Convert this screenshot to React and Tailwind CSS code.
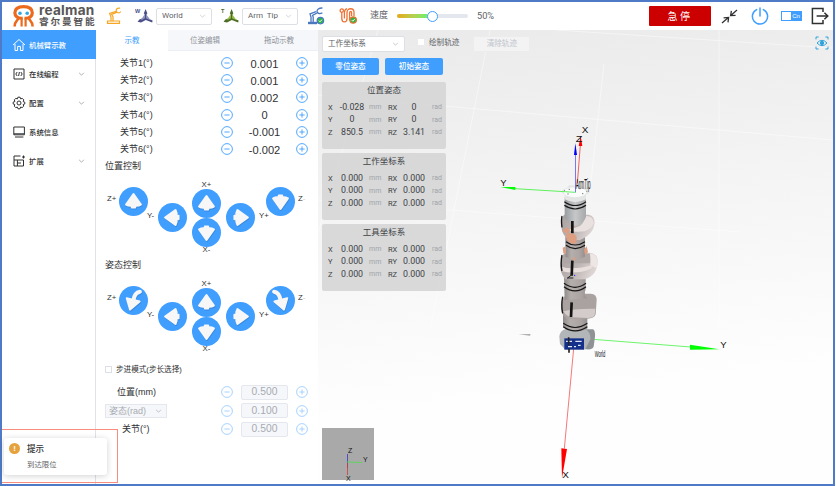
import React from "react";

const FONT = "font-['Liberation_Sans','Noto_Sans_CJK_SC',sans-serif]";

function Chevron({ className = "" }) {
  return (
    <svg viewBox="0 0 8 5" className={`h-[4px] w-[7px] shrink-0 ${className}`} fill="none" stroke="currentColor" strokeWidth="0.9">
      <path d="M1 1 L4 4 L7 1" />
    </svg>
  );
}

function Logo() {
  return (
    <div className="ml-[11px] flex h-[24px] w-[84px] shrink-0 items-start">
      <svg viewBox="0 0 21 24" className="h-[24px] w-[21px] shrink-0">
        <g fill="none" stroke="#ec6a1e" strokeWidth="3.2">
          <path d="M9.6 14.2 C4.2 14.6 1.8 11.6 1.9 8.8 C2 4.6 5.6 2.6 10.6 2.6 C15.6 2.6 19.2 4.6 19.3 8.8 C19.4 11.6 17 14.6 11.6 14.2" />
          <path d="M8.6 13.6 V22.4 M12.6 13.6 V22.4" strokeWidth="2.2" />
          <path d="M5.4 13.6 C5.4 17 1.6 16.5 1.6 22.4 M15.8 13.6 C15.8 17 19.6 16.5 19.6 22.4" strokeWidth="2.6" />
        </g>
        <circle cx="7" cy="9.2" r="1.8" fill="#35a8e0" />
        <circle cx="14.2" cy="9.2" r="1.8" fill="#35a8e0" />
      </svg>
      <div className="ml-[5px] flex flex-col whitespace-nowrap text-[#595757]">
        <span className="h-[12px] font-['Inter',sans-serif] text-[13.6px] leading-[13px] font-bold tracking-[0.25px]">realman</span>
        <span className="h-[11px] text-[9.6px] leading-[12px] font-bold tracking-[1.9px]">睿尔曼智能</span>
      </div>
    </div>
  );
}

function ArmIcon({ className, color }) {
  return (
    <svg viewBox="0 0 16 18" className={`h-[18px] w-[16px] shrink-0 ${className}`} fill="none" stroke={color} strokeWidth="1.2" strokeLinecap="round">
      <path d="M1.5 14 H13.5 V16.4 H1.5 Z" />
      <path d="M5 13.8 V10 L3.6 6.4 L10.2 4.2 M7 13.8 V9.6 L5.6 7.4 L10.6 5.4" />
      <path d="M13.6 1.2 C11 .8 9.6 2.6 10.4 4.4 C11.2 6 13.6 6.2 14.4 5" />
    </svg>
  );
}

function AxisIcon({ letter, dark, light }) {
  return (
    <svg viewBox="0 0 18 18" className="h-[18px] w-[18px] shrink-0">
      <text x="0" y="5.5" fontSize="5.5" fontWeight="700" fill={dark}>{letter}</text>
      <path d="M10.6 2 L12.4 6.6 L11.6 7 V11 L17.6 13.6 L17.2 15.4 L10.8 13 L6 15.4 L2.6 14.8 L4.4 12.6 L9.6 10.6 V7 L8.8 6.6Z" fill={dark} />
      <path d="M9.8 7 V11.4 L5.6 13.4 Z M11.4 7.500 V11.4 L15.6 13.2Z" fill={light} />
    </svg>
  );
}

function GreenCheck({ cx, cy }) {
  return (
    <g>
      <circle cx={cx} cy={cy} r="3.2" fill="#2cb742" />
      <path d={`M${cx - 1.5} ${cy} l1.1 1.2 l2 -2.2`} fill="none" stroke="#fff" strokeWidth="0.9" />
    </g>
  );
}

function Header() {
  return (
    <header className="flex h-[28px] shrink-0 items-center bg-white text-[8px] text-[#606266]">
      <Logo />
      <ArmIcon className="ml-[9px]" color="#f5a623" />
      <div className="ml-[13px] flex"><AxisIcon letter="W" dark="#4a4e86" light="#8d92bf" /></div>
      <div className="ml-[3px] flex h-[17px] w-[56px] items-center justify-between rounded-[2px] border border-[#dcdfe6] px-[5px] font-['Roboto',sans-serif]">
        <span>World</span><Chevron className="text-[#c0c4cc]" />
      </div>
      <div className="ml-[9px] flex"><AxisIcon letter="T" dark="#4c6b22" light="#94bb40" /></div>
      <div className="ml-[3px] flex h-[17px] w-[56px] items-center justify-between rounded-[2px] border border-[#dcdfe6] px-[5px] font-['Roboto',sans-serif]">
        <span className="whitespace-pre">Arm  Tip</span><Chevron className="text-[#c0c4cc]" />
      </div>
      <svg viewBox="0 0 17 18" className="ml-[10px] h-[18px] w-[17px] shrink-0" fill="none" stroke="#4a78c0" strokeWidth="1.3">
        <path d="M0 16 H9" strokeWidth="2.4" />
        <path d="M3 15 V10 L2 7 L8 4.6 M5.2 15 V10 L4.6 8.4 L9 6" />
        <path d="M14.4 1 C11 0.8 8.6 2.4 9 4.8 C9.6 6.8 12 7 14.4 5.8" />
        <GreenCheck cx={12.4} cy={13.6} />
      </svg>
      <svg viewBox="0 0 18 18" className="ml-[14px] h-[18px] w-[18px] shrink-0" fill="none" stroke="#ee7135" strokeWidth="1.3">
        <circle cx="2.8" cy="3.6" r="1.7" />
        <path d="M2.8 5.4 V11.500 C2.8 16 8 16 8 11.500 V5.500 C8 0.500 15 0.500 15 5.500 V9 M5.4 11.500 V5.500 C5.6 3 6.6 2 8 1.600 M10.6 13.500 V6 C10.6 4 12.600 4 12.600 6 V9" />
        <GreenCheck cx={14.2} cy={13} />
      </svg>
      <span className="ml-[13px] text-[9px]">速度</span>
      <div className="ml-[9px] flex h-[4px] w-[71px] items-center rounded-full bg-[#e4e7ed]">
        <div className="h-[4px] w-[30px] rounded-l-full bg-linear-to-r from-[#e6a817] to-[#67ef6a]" />
        <div className="size-[11px] rounded-full border-[1.5px] border-[#409eff] bg-white" />
      </div>
      <span className="ml-[9px] font-['Roboto',sans-serif] text-[9.2px]">50%</span>
      <div className="ml-auto flex h-[20px] w-[62px] items-center justify-center rounded-[1px] bg-[#cc0000] text-[10px] tracking-[2.5px] text-white">急停</div>
      <svg viewBox="0 0 17 17" className="ml-[10px] size-[17px] shrink-0" fill="none" stroke="#303133" strokeWidth="1.3">
        <path d="M16 2 L9.8 7.4 M10.4 2.8 L9.6 7.6 L14.6 7.4 M1 15 L7.4 9.6 M2.6 9.8 L7.6 9.4 L7 14.4" />
      </svg>
      <svg viewBox="0 0 18 18" className="ml-[13px] size-[18px] shrink-0" fill="none" stroke="#409eff" strokeWidth="1.5" strokeLinecap="round">
        <path d="M5.6 2.6 A7.6 7.6 0 1 0 12.4 2.6 M9 1 V9" />
      </svg>
      <div className="ml-[12px] flex h-[10px] w-[21px] border border-[#409eff] bg-[#409eff]">
        <div className="h-full w-[9px] bg-white" />
        <span className="flex flex-1 items-center justify-center text-[6px] leading-none text-white">Cn</span>
      </div>
      <svg viewBox="0 0 18 18" className="mr-[4px] ml-[9px] size-[18px] shrink-0" fill="none" stroke="#303133" strokeWidth="1.5">
        <path d="M12 5 V1.4 H1.4 V16.6 H12 V13 M5.6 9 H16.4 M13.4 5.8 L16.8 9 L13.4 12.2" />
      </svg>
    </header>
  );
}

const NAV = [
  { label: "机械臂示教", active: true, icon: <path d="M1 7 L7 1.5 L13 7 M3 6 V12.5 H5.6 V8.4 H8.4 V12.5 H11 V6" /> },
  { label: "在线编程", arrow: true, icon: <path d="M2 2 H12 V12 H2Z M5.2 5 L3.8 7 L5.2 9 M8.8 5 L10.2 7 L8.8 9 M7.4 5 L6.6 9" /> },
  { label: "配置", arrow: true, icon: <><path d="M5.9 1.2 H8.1 L8.6 2.9 L10.4 2.4 L11.8 3.9 L11.2 5.6 L12.8 6.2 V8 L11.2 8.5 L11.7 10.2 L10.2 11.6 L8.6 11 L8 12.8 H6 L5.4 11.1 L3.7 11.6 L2.3 10.2 L2.8 8.5 L1.2 8 V6.1 L2.9 5.5 L2.3 3.8 L3.8 2.4 L5.4 2.9Z" /><circle cx="7" cy="7" r="2" /></> },
  { label: "系统信息", icon: <path d="M1.8 2 H12.4 V9.8 H1.8Z M1.8 8.8 H12.4 M3 12 H11.4" /> },
  { label: "扩展", arrow: true, icon: <path d="M8.5 2 H2 V12 H11.5 V6 H2 M5.4 6 V12 M5.4 9 H9 M11.5 1.5 V4.5 M10 3 H13" /> },
];

function Sidebar() {
  return (
    <nav className="flex w-[94px] shrink-0 flex-col border-r border-[#e0e2e8] bg-white">
      {NAV.map((n) => (
        <div key={n.label} className={`flex h-[29.2px] shrink-0 items-center pl-[10px] text-[7.4px] font-medium ${n.active ? "-mr-px bg-[#409eff] text-white" : "text-[#303133]"}`}>
          <svg viewBox="0 0 14 14" className="size-[14px] shrink-0" fill="none" stroke="currentColor" strokeWidth="1">{n.icon}</svg>
          <span className="ml-[3px] pt-[1px] whitespace-nowrap">{n.label}</span>
          {n.arrow && <Chevron className="mr-[10px] ml-auto h-[3.500px] w-[5.500px] text-[#909399]" />}
        </div>
      ))}
    </nav>
  );
}

function RoundBtn({ plus, faded }) {
  return (
    <svg viewBox="0 0 12 12" className={`size-[12px] shrink-0 ${faded ? "opacity-50" : ""}`} fill="none" stroke="#409eff" strokeWidth="0.9">
      <circle cx="6" cy="6" r="5.4" />
      <path d={plus ? "M3.4 6 H8.6 M6 3.4 V8.6" : "M3.4 6 H8.6"} />
    </svg>
  );
}

const ANGLES = { up: 0, right: 90, down: 180, left: 270 };

function ArrowButton({ dir, className = "" }) {
  const turn = dir === "turnLeft" || dir === "turnRight";
  return (
    <svg viewBox="0 0 86 86" className={`size-[29px] shrink-0 ${className}`}>
      <circle cx="43" cy="43" r="43" fill="#409eff" />
      {[["#2f6fb5", 3, 0.45], ["#f7f7f7", 0, 1]].map(([c, d, o]) => (
        <g key={c} transform={`translate(${d * 0.5} ${d})`} opacity={o} stroke={c} fill={c} strokeLinejoin="round" strokeWidth="6">
          {turn ? (
            <g transform={dir === "turnRight" ? "translate(86 0) scale(-1 1)" : undefined}>
              <path d="M23 36 L61 46 L33 70Z" />
              <path d="M62 17 Q46 20 43 42" fill="none" strokeWidth="12" strokeLinecap="round" />
            </g>
          ) : (
            <path d="M43 21 L65 52 Q56 57 48 55 V61 H38 V55 Q30 57 21 52Z" transform={`rotate(${ANGLES[dir]} 43 43)`} />
          )}
        </g>
      ))}
    </svg>
  );
}

function Pad({ left, right }) {
  return (
    <div className="flex h-[78px] items-start pl-[11px] text-[7.8px] leading-[10px] whitespace-nowrap text-[#303133]">
      <span className="mt-[14px] w-[12px]">Z+</span>
      <ArrowButton dir={left} className="mt-[7px]" />
      <span className="mt-[31px] -ml-px w-[11px]">Y-</span>
      <ArrowButton dir="left" className="mt-[23px]" />
      <div className="mx-[5px] flex w-[29px] flex-col items-center">
        <span className="h-[9px]">X+</span>
        <ArrowButton dir="up" />
        <ArrowButton dir="down" className="mt-[0.7px]" />
        <span className="-mt-[2px]">X-</span>
      </div>
      <ArrowButton dir="right" className="mt-[23px]" />
      <span className="mt-[31px] ml-[4px] w-[7px]">Y+</span>
      <ArrowButton dir={right} className="mt-[7px]" />
      <span className="mt-[14px] ml-[3px]">Z<span className="text-[#c8c8c8]">-</span></span>
    </div>
  );
}

const JOINTS = ["0.001", "0.001", "0.002", "0", "-0.001", "-0.002"];

function StepRow({ children, value }) {
  return (
    <div className="flex h-[18.4px] items-center">
      <div className="flex w-[116px] items-center">{children}</div>
      <RoundBtn faded />
      <div className="mx-[8px] flex h-[15px] w-[47px] items-center justify-center rounded-[2px] border border-[#e4e7ed] bg-[#f5f7fa] text-[10.3px] text-[#a8abb2]">{value}</div>
      <RoundBtn plus faded />
    </div>
  );
}

function TeachPanel() {
  return (
    <section className="flex w-[222px] shrink-0 flex-col bg-white text-[9px] leading-[12px] text-[#303133]">
      <div className="flex h-[21px] shrink-0 text-[7.5px] text-[#909399]">
        <div className="flex w-[72px] items-center justify-center pt-[1px] text-[#409eff]">示教</div>
        <div className="flex flex-1 border-b border-[#ebeef5] bg-[#f5f7fa] pt-[2px]">
          <div className="flex flex-1 items-center justify-center">位姿编辑</div>
          <div className="flex flex-1 items-center justify-center pr-[2px]">拖动示教</div>
        </div>
      </div>
      <div className="mt-[3.5px] shrink-0">
        {JOINTS.map((v, i) => (
          <div key={i} className="flex h-[17.2px] items-center">
            <span className="ml-[24px] w-[101px]">关节{i + 1}(°)</span>
            <RoundBtn />
            <span className="w-[63px] pt-[1px] text-center text-[11.1px]">{v}</span>
            <RoundBtn plus />
          </div>
        ))}
      </div>
      <div className="mt-[2px] ml-[9px]">位置控制</div>
      <div className="mt-[8px]"><Pad left="up" right="down" /></div>
      <div className="mt-[1.5px] ml-[9px]">姿态控制</div>
      <div className="mt-[7.5px]"><Pad left="turnLeft" right="turnRight" /></div>
      <div className="mt-[7px] ml-[9px] flex items-center text-[7.6px]">
        <span className="mr-[4px] size-[7px] border border-[#dcdfe6]" />步进模式(步长选择)
      </div>
      <div className="mt-[7.5px] pl-[9px]">
        <StepRow value="0.500"><span className="ml-[12px]">位置(mm)</span></StepRow>
        <StepRow value="0.100">
          <div className="flex h-[14px] w-[62px] items-center justify-between border border-[#e4e7ed] bg-[#f5f7fa] pr-[4px] pl-[3px] text-[#a8abb2]">
            姿态(rad)<Chevron className="text-[#a8abb2]" />
          </div>
        </StepRow>
        <StepRow value="0.500"><span className="ml-[17px]">关节(°)</span></StepRow>
      </div>
    </section>
  );
}

function PoseCard({ title, rows }) {
  return (
    <div className="h-[67px] w-[124px] rounded-[2px] bg-[#d3d3d3]/85 font-['Roboto','Noto_Sans_CJK_SC',sans-serif] text-[#404347]">
      <div className="pt-[2px] text-center text-[8.5px] leading-[12px]">{title}</div>
      <div className="mt-[5px]">
        {rows.map(([a, v, b, w]) => (
          <div key={a} className="flex h-[12.5px] items-center pl-[6px] text-[7.5px] whitespace-nowrap">
            <span className="w-[9px]">{a}</span>
            <span className="w-[30px] text-center text-[8.8px]">{v}</span>
            <span className="ml-[2px] w-[19px] text-[7px] text-[#a0a4aa]">mm</span>
            <span className="w-[12px]">{b}</span>
            <span className="w-[28px] text-center text-[8.8px]">{w}</span>
            <span className="ml-[4px] text-[7px] text-[#a0a4aa]">rad</span>
          </div>
        ))}
      </div>
    </div>
  );
}

const ZERO = [["X", "0.000", "RX", "0.000"], ["Y", "0.000", "RY", "0.000"], ["Z", "0.000", "RZ", "0.000"]];

function Scene() {
  return (
    <svg viewBox="318 30 515 454" className="absolute inset-0 h-full w-full">
      <defs>
        <linearGradient id="floor" x1="0" y1="0" x2="0.12" y2="1">
          <stop offset="0" stopColor="#eaeaea" /><stop offset="0.45" stopColor="#f5f5f5" /><stop offset="0.85" stopColor="#fefefe" />
        </linearGradient>
        <linearGradient id="tube" x1="0" x2="1">
          <stop offset="0" stopColor="#8f8a8a" /><stop offset="0.3" stopColor="#b4aeac" /><stop offset="0.75" stopColor="#aaa3a2" /><stop offset="1" stopColor="#958f8f" />
        </linearGradient>
        <linearGradient id="tubeTop" x1="0" x2="1">
          <stop offset="0" stopColor="#999da0" /><stop offset="0.5" stopColor="#c6c7c9" /><stop offset="1" stopColor="#a6a8aa" />
        </linearGradient>
        <linearGradient id="shell" x1="0" x2="1" y1="0" y2="0.4">
          <stop offset="0" stopColor="#a8a19f" /><stop offset="0.6" stopColor="#bdb6b4" /><stop offset="1" stopColor="#ddd5d3" />
        </linearGradient>
      </defs>
      <rect x="318" y="30" width="515" height="454" fill="url(#floor)" />
      <g stroke="#fff" strokeWidth="0.6" strokeOpacity="0.75" fill="none">
        <path d="M378 30 L318 233 M490 30 L430 330 M604 64 L590 190 M719 30 V330 M556 30 L833 48 M318 95 L833 140 M318 200 L740 232" />
      </g>
      <g transform="translate(490 120) scale(0.33333)">
        <path d="M262 190 L271 76" stroke="#f26060" strokeWidth="3" fill="none" />
        <path d="M266 78 L272 48 L277 78Z" fill="#f00" />
        <path d="M251 686 L223 986" stroke="#f47878" strokeWidth="3" fill="none" />
        <path d="M214 985 L231 987 L216 1074Z" fill="#f00" />
        <path d="M310 658 L602 681" stroke="#6cf46c" strokeWidth="3" fill="none" />
        <path d="M600 674 V689 L688 688Z" fill="#0f0" />
        <path d="M86 643 L122 642 L120 647Z" fill="#aaa" />

        <path d="M270 628 H309 Q316 630 315 650 L311 680 Q306 690 290 688 L250 686Z" fill="#8f9395" />
        <path d="M208 650 Q210 629 230 626 L284 626 Q303 635 301 658 L286 688 H225 L210 672Z" fill="#b2b6b8" />
        <path d="M219 575 H292 V626 Q254 645 219 622Z" fill="url(#tube)" />
        <path d="M213 565 Q213 525 240 521 H302 Q321 522 320 540 L317 583 Q312 597 290 596 H232 Q216 590 213 565Z" fill="#a9a2a0" />
        <path d="M220 574 Q250 565 316 566 L314 584 Q310 594 292 594 L246 592 Q230 590 220 574Z" fill="#d3ccca" />
        <path d="M222 470 H287 V508 Q280 526 292 535 L224 540Z" fill="url(#tube)" />
        <path d="M211 438 Q214 406 225 398 L292 398 Q322 398 323 423 Q323 465 285 478 L226 478 Q211 462 211 438Z" fill="url(#shell)" />
        <path d="M300 400 Q321 402 322 424 L320 445 Q314 440 302 438Z" fill="#eee6e4" />
        <path d="M220 430 L300 430 Q302 410 299 402 L238 400 Q224 408 220 430Z" fill="#aea7a6" />
        <path d="M215 440 Q248 452 311 434 L303 446 Q260 464 217 454Z" fill="#e9e0de" />
        <path d="M226 350 H285 V410 Q255 425 226 410Z" fill="url(#tube)" />
        <path d="M214 320 Q212 298 222 284 L296 284 Q315 288 314 310 Q310 345 270 360 L236 360 Q216 345 214 320Z" fill="url(#shell)" />
        <path d="M284 288 Q311 286 311 310 Q306 326 284 334 Q250 338 236 330 L270 318 Q286 305 284 288Z" fill="#e9e1e0" />
        <path d="M224 232 H288 V291 Q280 312 258 318 Q226 305 224 292Z" fill="url(#tubeTop)" />
        <path d="M214 217 Q216 208 231 204 L237 196 L270 197 L295 207 L298 219 L288 224 V238 Q255 255 224 238 V226Z" fill="#e4e6e6" />
        <ellipse cx="255" cy="217" rx="34" ry="15" fill="#fbfbfb" />
        <path d="M236 208 h4 M268 206 h4 M232 222 h4 M276 221 h4 M222 212 h3 M289 214 h3" stroke="#777" strokeWidth="3" />

        <g fill="none" stroke="#161616" strokeWidth="3.500">
          <path d="M223 245 Q255 268 288 245 M223 256 Q255 278 288 256" />
          <path d="M228 365 Q255 385 285 365 M228 376 Q255 396 285 376" />
          <path d="M222 490 Q255 514 288 490 M222 500 Q255 525 288 500" />
          <path d="M220 610 Q255 635 292 610 M220 620 Q255 645 292 620" />
          <path d="M216 288 Q213 303 216 322 M216 405 Q211 430 216 453 M218 530 Q213 555 218 580" strokeWidth="4" />
        </g>
        <g stroke="#151313" strokeWidth="8">
          <path d="M247 303 V340 M247 422 L245 467 M245 547 L243 591" />
        </g>
        <g fill="#dd9e82">
          <path d="M227 342 Q252 334 260 352 L259 370 Q240 375 230 358Z" />
          <path d="M218 330 L231 322 L240 330 L236 340 L221 337Z M218 383 L225 380 L228 402 L220 400Z M282 389 L290 379 L294 396 L285 406Z M249 411 L256 413 L255 422 L249 419Z" />
        </g>
        <path d="M233 474 L247 463 M231 474 H250" stroke="#222" strokeWidth="3" />
        <circle cx="254" cy="466" r="2" fill="#22f" />
        <path d="M223 655 H282 V689 H223Z" fill="#14308a" />
        <path d="M228 664 H246 M234 680 H246 M256 664 H275 M252 680 H258 M264 676 H272" stroke="#dfe6fa" strokeWidth="4" fill="none" />
        <path d="M236 652 V676 M237 686 V698" stroke="#222" strokeWidth="5" />

        <path d="M75 206 L256 217" stroke="#5cf25c" strokeWidth="3" />
        <path d="M32 201 L76 201 V210Z" fill="#0f0" />
        <path d="M256.500 104 V217" stroke="#7777e8" strokeWidth="3" />
        <path d="M252 105 L256 70 L261 105Z" fill="#0000f5" />
        <g fontFamily="'Liberation Sans', sans-serif" fontSize="26" fill="#111">
          <text x="275" y="38" textLength="20" lengthAdjust="spacingAndGlyphs">X</text>
          <text x="257" y="65" textLength="20" lengthAdjust="spacingAndGlyphs">Z</text>
          <text x="31" y="197" textLength="19" lengthAdjust="spacingAndGlyphs">Y</text>
          <text x="691" y="685" textLength="19" lengthAdjust="spacingAndGlyphs">Y</text>
          <text x="217" y="1074" textLength="20" lengthAdjust="spacingAndGlyphs">X</text>
          <text x="257" y="206" fontSize="42" textLength="45" lengthAdjust="spacingAndGlyphs">ArmTip</text>
          <text x="314" y="711" fontSize="28" textLength="32" lengthAdjust="spacingAndGlyphs">World</text>
        </g>
      </g>
      <rect x="322" y="428" width="52" height="52" fill="#a9a9a9" />
      <path d="M347.500 468 V454" stroke="#3737c8" strokeWidth="0.8" />
      <path d="M347 462 L362 462.500" stroke="#4be04b" strokeWidth="0.8" />
      <path d="M347.500 463 V475" stroke="#d23c3c" strokeWidth="0.8" />
      <g fontFamily="'Liberation Sans', sans-serif" fontSize="7" fill="#111">
        <text x="348" y="453">Z</text><text x="363" y="462">Y</text><text x="346" y="481">X</text>
      </g>
    </svg>
  );
}

function Viewport() {
  return (
    <main className="relative min-w-0 flex-1 overflow-hidden">
      <Scene />
      <div className="relative flex h-full flex-col pl-[4px] text-[7.6px] text-[#606266]">
        <div className="flex h-[28px] items-center">
          <div className="flex h-[16px] w-[83px] items-center justify-between rounded-[2px] border border-[#dcdfe6] bg-white pr-[5px] pl-[5px]">
            工作坐标系<Chevron className="text-[#b0b4bc]" />
          </div>
          <span className="mr-[5px] ml-[13px] -mt-[4px] size-[6px] bg-white" />
          <span className="-mt-[3px]">绘制轨迹</span>
          <div className="ml-[14px] flex h-[16px] w-[57px] items-center justify-center rounded-[1px] border border-[#ececec] bg-[#f3f3f3] text-[#c0c4cc]">清除轨迹</div>
          <svg viewBox="0 0 14 14" className="mr-[4px] mb-[3px] ml-auto size-[14px]" fill="none" stroke="#2ea3dc" strokeWidth="1">
            <path d="M1 3.400 V1 H3.600 M10.400 1 H13 V3.400 M13 10.600 V13 H10.400 M3.600 13 H1 V10.600 M2 7 Q7 1.600 12 7 Q7 12.400 2 7Z" />
            <circle cx="7" cy="7" r="1.700" fill="#2ea3dc" />
          </svg>
        </div>
        <div className="flex gap-[6px] font-medium text-white">
          <div className="flex h-[17px] w-[57px] items-center justify-center rounded-[2px] bg-[#409eff]">零位姿态</div>
          <div className="flex h-[17px] w-[58px] items-center justify-center rounded-[2px] bg-[#409eff]">初始姿态</div>
        </div>
        <div className="mt-[7px] flex flex-col gap-[4px]">
          <PoseCard title="位置姿态" rows={[["X", "-0.028", "RX", "0"], ["Y", "0", "RY", "0"], ["Z", "850.5", "RZ", "3.141"]]} />
          <PoseCard title="工作坐标系" rows={ZERO} />
          <PoseCard title="工具坐标系" rows={ZERO} />
        </div>
      </div>
    </main>
  );
}

function Notice() {
  return (
    <div className="absolute top-[427px] left-0 h-[54px] w-[116px] border border-l-0 border-[#f88d80] pt-[8px] pl-[2px]">
      <div className="flex h-[37px] w-[103px] rounded-[3px] bg-white pt-[5px] pl-[5px] shadow-[0_1px_6px_rgba(0,0,0,0.18)]">
        <div className="flex size-[11px] shrink-0 items-center justify-center rounded-full bg-[#e6a23c] text-[8px] leading-none font-bold text-white">!</div>
        <div className="ml-[7px]">
          <div className="text-[8.6px] leading-[12px] font-medium text-[#303133]">提示</div>
          <div className="mt-[4px] text-[7.4px] leading-[11px] text-[#606266]">到达限位</div>
        </div>
      </div>
    </div>
  );
}

export default function App() {
  return (
    <div className={`h-[486px] w-[836px] overflow-hidden bg-white ${FONT}`}>
      <div className="relative flex h-[486px] w-[835px] flex-col border-2 border-[#4f7ac7]">
        <Header />
        <div className="flex min-h-0 flex-1">
          <Sidebar />
          <TeachPanel />
          <Viewport />
        </div>
        <Notice />
      </div>
    </div>
  );
}
